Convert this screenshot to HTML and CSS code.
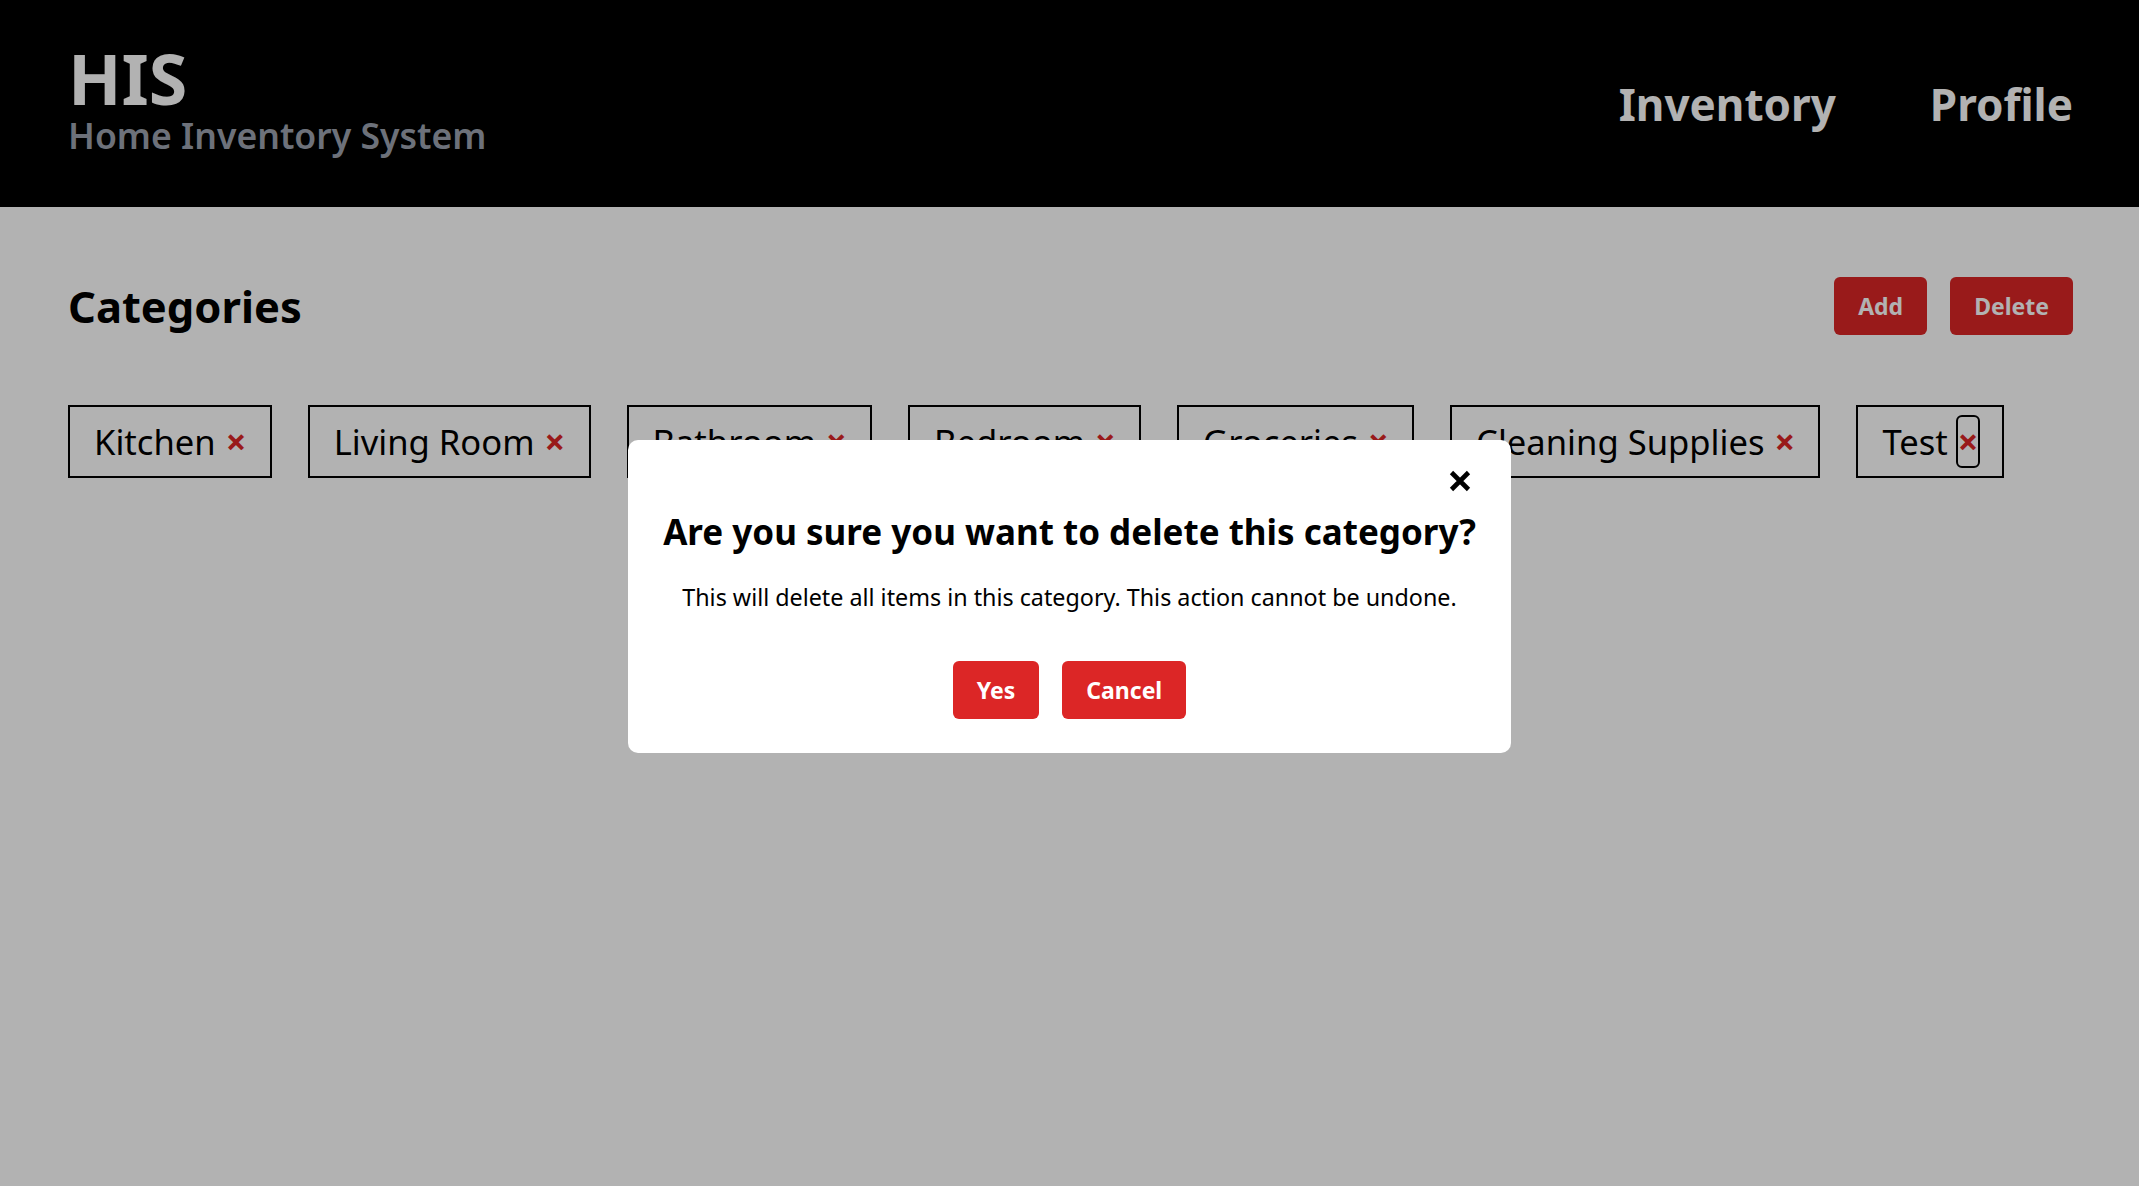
FILE: index.html
```html
<!DOCTYPE html>
<html lang="en">
<head>
<meta charset="utf-8">
<title>HIS - Categories</title>
<link rel="stylesheet" href="styles.css">
</head>
<body>
<header class="topbar">
  <div class="brand">
    <div class="brand-title">HIS</div>
    <div class="brand-sub">Home Inventory System</div>
  </div>
  <nav class="nav">
    <a class="nav-link" href="#">Inventory</a>
    <a class="nav-link" href="#">Profile</a>
  </nav>
</header>
<main class="content">
  <div class="section-head">
    <h1 class="section-title">Categories</h1>
    <div class="actions">
      <button class="btn btn-dim">Add</button>
      <button class="btn btn-dim">Delete</button>
    </div>
  </div>
  <ul class="chips">
    <li class="chip"><span>Kitchen</span><button class="chip-x">×</button></li>
    <li class="chip"><span>Living Room</span><button class="chip-x">×</button></li>
    <li class="chip"><span>Bathroom</span><button class="chip-x">×</button></li>
    <li class="chip"><span>Bedroom</span><button class="chip-x">×</button></li>
    <li class="chip"><span>Groceries</span><button class="chip-x">×</button></li>
    <li class="chip"><span>Cleaning Supplies</span><button class="chip-x">×</button></li>
    <li class="chip"><span>Test</span><button class="chip-x chip-x-focus">×</button></li>
  </ul>
</main>
<div class="overlay">
  <div class="modal">
    <div class="modal-close-row">
      <button class="modal-close" aria-label="Close">
        <svg width="22" height="22" viewBox="0 0 22 22"><path d="M2.5 2.5 L19.5 19.5 M19.5 2.5 L2.5 19.5" stroke="#000" stroke-width="4.6" fill="none"/></svg>
      </button>
    </div>
    <h2 class="modal-title">Are you sure you want to delete this category?</h2>
    <p class="modal-text">This will delete all items in this category. This action cannot be undone.</p>
    <div class="modal-actions">
      <button class="btn btn-red">Yes</button>
      <button class="btn btn-red">Cancel</button>
    </div>
  </div>
</div>
</body>
</html>
```

FILE: styles.css
```css
* { box-sizing: border-box; }
html, body {
  margin: 0;
  padding: 0;
  background: #ffffff;
  font-family: "Noto Sans", "Open Sans", sans-serif;
  color: #000;
}
button { font-family: inherit; }

.topbar {
  height: 207px;
  background: #000;
  display: flex;
  justify-content: space-between;
  align-items: center;
  padding: 0 66px 0 68px;
}
.brand {
  display: flex;
  flex-direction: column;
  padding-bottom: 6px;
}
.brand-title {
  color: #fff;
  font-size: 70px;
  font-weight: 700;
  line-height: 69px;
}
.brand-sub {
  color: #9ca3af;
  font-size: 35.6px;
  font-weight: 600;
  line-height: 44px;
}
.nav {
  display: flex;
  gap: 94px;
  align-items: center;
}
.nav-link {
  color: #fff;
  font-size: 44px;
  font-weight: 700;
  text-decoration: none;
}

.content {
  padding: 70px 66px 70px 68px;
}
.section-head {
  display: flex;
  justify-content: space-between;
  align-items: center;
  height: 58px;
}
.section-title {
  margin: 0;
  font-size: 43.5px;
  font-weight: 700;
}
.actions {
  display: flex;
  gap: 23px;
}
.btn {
  height: 58px;
  padding: 0 24px;
  border: none;
  border-radius: 6px;
  font-size: 23px;
  font-weight: 700;
  color: #fff;
  cursor: pointer;
}
.btn-dim { background: #dc2626; }
.btn-red { background: #dc2626; }

.chips {
  list-style: none;
  margin: 70px 0 0;
  padding: 0;
  display: flex;
  flex-wrap: wrap;
  gap: 36px;
}
.chip {
  display: flex;
  align-items: center;
  gap: 10px;
  border: 2px solid #000;
  padding: 10px 24px;
  font-size: 34.6px;
  line-height: 49px;
}
.chip-x {
  background: none;
  border: none;
  padding: 0;
  width: 20px;
  color: #dc2626;
  font-size: 36px;
  font-weight: 700;
  line-height: 49px;
  border-radius: 4px;
}
.chip-x-focus {
  outline: 2px solid #000;
  outline-offset: 0;
}

.overlay {
  position: fixed;
  inset: 0;
  background: rgba(0, 0, 0, 0.3);
  display: flex;
  align-items: center;
  justify-content: center;
}
.modal {
  background: #fff;
  border-radius: 10px;
  padding: 30px 35px 34px;
  display: flex;
  flex-direction: column;
  align-items: center;
  margin-top: 7px;
}
.modal-close-row {
  align-self: stretch;
  display: flex;
  justify-content: flex-end;
}
.modal-close {
  background: none;
  border: none;
  padding: 0;
  margin-right: 5px;
  width: 22px;
  height: 22px;
  display: block;
}
.modal-close svg { display: block; }
.modal-title {
  margin: 13px 0 0;
  font-size: 35px;
  font-weight: 700;
  line-height: 54px;
  text-align: center;
}
.modal-text {
  margin: 22px 0 0;
  font-size: 23.3px;
  line-height: 33px;
  text-align: center;
}
.modal-actions {
  display: flex;
  gap: 23px;
  margin-top: 47px;
}
```
